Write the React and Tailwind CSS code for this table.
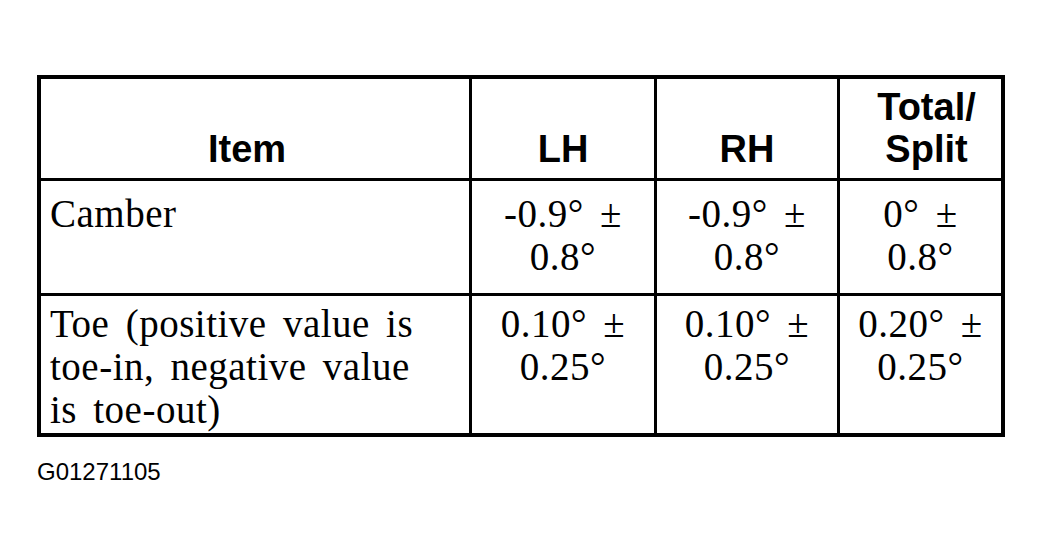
import React from "react";

const serif = "font-['Liberation_Serif','Times_New_Roman',serif]";
const sans = "font-['Liberation_Sans',Arial,sans-serif]";

const rows = [
  {
    pad: "pt-[11px]",
    item: ["Camber"],
    values: [
      ["-0.9° ±", "0.8°"],
      ["-0.9° ±", "0.8°"],
      ["0° ±", "0.8°"],
    ],
  },
  {
    pad: "pt-[6px]",
    item: ["Toe (positive value is", "toe-in, negative value", "is toe-out)"],
    values: [
      ["0.10° ±", "0.25°"],
      ["0.10° ±", "0.25°"],
      ["0.20° ±", "0.25°"],
    ],
  },
];

function Lines({ lines }) {
  return lines.map((l, i) => (
    <div key={i} className="whitespace-pre">
      {l}
    </div>
  ));
}

export default function App() {
  return (
    <div className="min-h-[557px] w-[1044px] bg-white pl-[37px] pt-[75px] text-black">
      <div className="grid w-[968px] grid-cols-[428px_182px_180px_161px] grid-rows-[99px_112px_137px] gap-[3px] border-4 border-black bg-black">
        {/* header */}
        <div className={`flex items-end justify-center bg-white pb-2 pr-4 text-[38px] font-bold leading-[42px] ${sans}`}>
          Item
        </div>
        <div className={`flex items-end justify-center bg-white pb-2 text-[38px] font-bold leading-[42px] ${sans}`}>
          LH
        </div>
        <div className={`flex items-end justify-center bg-white pb-2 text-[38px] font-bold leading-[42px] ${sans}`}>
          RH
        </div>
        <div className={`flex flex-col items-center justify-end bg-white pb-2 pl-3 text-[38px] font-bold leading-[42px] ${sans}`}>
          <div>Total/</div>
          <div>Split</div>
        </div>

        {rows.map((r, ri) => (
          <React.Fragment key={ri}>
            <div className={`bg-white pl-[9px] ${r.pad} text-[39px] leading-[43px] tracking-[0.5px] [word-spacing:6px] ${serif}`}>
              <Lines lines={r.item} />
            </div>
            {r.values.map((v, vi) => (
              <div
                key={vi}
                className={`bg-white ${r.pad} text-center text-[39px] leading-[43px] tracking-[0.5px] [word-spacing:6px] ${serif}`}
              >
                <Lines lines={v} />
              </div>
            ))}
          </React.Fragment>
        ))}
      </div>

      <div className={`mt-[21px] text-[24px] leading-[28px] ${sans}`}>G01271105</div>
    </div>
  );
}
